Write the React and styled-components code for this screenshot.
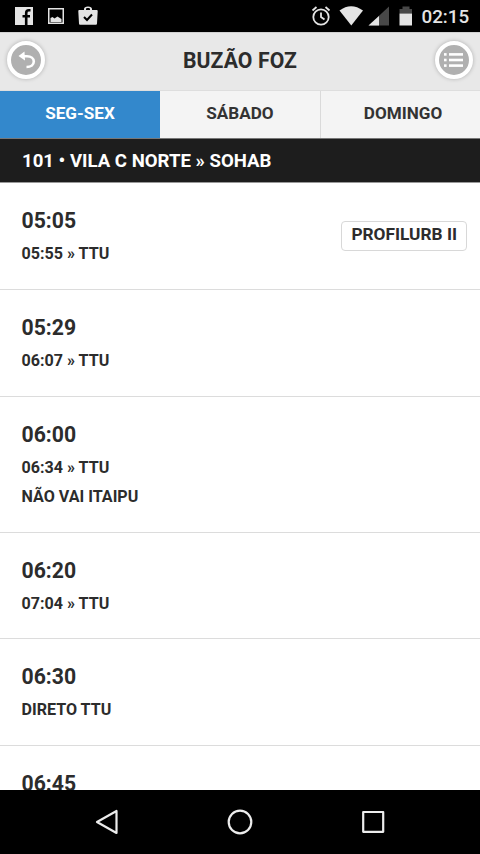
import React from 'react';

import styled, { createGlobalStyle } from 'styled-components';

const GlobalStyle = createGlobalStyle`
	body {
		margin: 0;
		background: #000;
		font-family: Roboto, "Liberation Sans", sans-serif;
		color: #2c2c2c;
	}

	* {
		box-sizing: border-box;
	}

	svg {
		display: block;
		flex: none;
	}
`

const Screen = styled.div`
	display: flex;
	flex-direction: column;
	width: 480px;
	height: 854px;
	overflow: hidden;
`

const StatusBar = styled.div`
	display: flex;
	flex: none;
	justify-content: space-between;
	height: 32px;
	background: #000;
	color: #e4e4e4;
`

const Clock = styled.span`
	padding-left: 9.5px;
	font-size: 18.8px;
	font-weight: 500;
	line-height: 34px;
	width: 68px;
	white-space: nowrap;
`

const StatusRight = styled.div`
	display: flex;
`

const Header = styled.header`
	display: flex;
	flex: none;
	align-items: center;
	justify-content: space-between;
	height: 59px;
	padding: 0 7px 3px;
	background: #e8e8e8;
	border-top: 1px solid #d2d2d2;
	border-bottom: 1px solid #dedede;
`

const Title = styled.h1`
	margin: 0;
	font-size: 21.2px;
	font-weight: 700;
	letter-spacing: 0.1px;
`

const RoundButton = styled.button`
	display: flex;
	align-items: center;
	justify-content: center;
	width: 38px;
	height: 38px;
	padding: 0;
	border: 4px solid #fff;
	border-radius: 50%;
	background: #b0b0b0;
	box-shadow: 0 0 4px rgba(0, 0, 0, 0.25);
`

const Tabs = styled.nav`
	display: flex;
	flex: none;
	height: 48px;
	background: #f4f4f4;
	border-bottom: 1px solid #777;
`

const Tab = styled.button`
	flex: none;
	width: ${props => props.$width}px;
	padding: 0 0 3px;
	border: 0;
	border-left: ${props => props.$divided ? '1px solid #dadada' : '0'};
	background: ${props => props.$active ? '#3388cc' : '#f4f4f4'};
	color: ${props => props.$active ? '#fff' : '#333'};
	font-family: inherit;
	font-size: 17.1px;
	font-weight: 700;
`

const RouteName = styled.h2`
	flex: none;
	height: 44px;
	margin: 0;
	padding-left: 22px;
	background: #1d1d1d;
	border-bottom: 1px solid #999;
	color: #fff;
	font-size: 18.6px;
	font-weight: 700;
	line-height: 44px;
`

const Schedule = styled.ul`
	flex: 1;
	min-height: 0;
	margin: 0;
	padding: 0;
	overflow: hidden;
	list-style: none;
	background: #fff;
`

const Row = styled.li`
	display: flex;
	align-items: flex-start;
	justify-content: space-between;
	height: ${props => props.$height}px;
	padding: 24px 13px 0 21.5px;
	border-bottom: 1px solid #dcdcdc;
`

const Time = styled.p`
	margin: 0 0 4px;
	font-size: 21.2px;
	font-weight: 700;
	line-height: 28px;
`

const Note = styled.p`
	margin: 0;
	font-size: 16.1px;
	font-weight: 700;
	line-height: 29px;
`

const Badge = styled.span`
	height: 30px;
	margin-top: 14px;
	padding: 0 9px;
	border: 1px solid #d8d8d8;
	border-radius: 4px;
	font-size: 17.3px;
	font-weight: 700;
	line-height: 24px;
`

const NavBar = styled.div`
	display: flex;
	flex: none;
	justify-content: center;
	height: 64px;
	background: #000;
`

const trips = [
	{ time: '05:05', notes: ['05:55 » TTU'], badge: 'PROFILURB II', height: 106.8 },
	{ time: '05:29', notes: ['06:07 » TTU'], height: 106.8 },
	{ time: '06:00', notes: ['06:34 » TTU', 'NÃO VAI ITAIPU'], height: 136.4 },
	{ time: '06:20', notes: ['07:04 » TTU'], height: 106.5 },
	{ time: '06:30', notes: ['DIRETO TTU'], height: 106.5 },
	{ time: '06:45', notes: [], height: 107 },
]

function NotificationIcons() {
	return (
		<svg width="110" height="32" viewBox="0 0 110 32" fill="#e4e4e4">
			<path d="M15 7h18v18H15z" />
			<path d="M26.200 25v-12q0-2.700 2.800-2.700h1.500M22.500 16.200h7.500" fill="none" stroke="#000" strokeWidth="2.600" />
			<path fillRule="evenodd" d="M48 8h16v16H48zM49.500 9.500v13h13v-13z" />
			<path d="M50.500 22v-4l2-1 2 1.500 3-2 1.500 1 2.500 1.500v3z" />
			<path fillRule="evenodd" d="M79.500 10H84V9c0-1.500 1.500-2.500 4-2.500s4 1 4 2.500v1h4.500c.8 0 1.200.5 1.200 1.200L97 23.500c0 .8-.6 1.300-1.400 1.300H80.400c-.8 0-1.400-.5-1.400-1.300l-.7-12.300c0-.7.4-1.200 1.200-1.200zM86 10h4V9c0-.7-.7-1-2-1s-2 .3-2 1z" />
			<path d="M84 17l3 3 5-5.500" fill="none" stroke="#000" strokeWidth="2" />
		</svg>
	)
}

function SystemIcons() {
	return (
		<svg width="112" height="32" viewBox="300 0 112 32" fill="#e4e4e4">
			<g fill="none" stroke="#e4e4e4" strokeWidth="1.800">
				<circle cx="321" cy="17" r="7.700" />
				<path d="M321 12.500V17l3.500 2.500M312.500 10.500l4-3.500M329.500 10.500l-4-3.500" />
			</g>
			<path d="M339.500 10.500q11.500-8.500 23.500 0L351.300 25.500z" />
			<path d="M389 6.500v19h-20.500z" fill="#484848" />
			<path d="M379 16v9.500h-10.500z" />
			<path d="M399.500 9h3V6.500h7V9h3v4.500h-13z" fill="#484848" />
			<path d="M399.500 13.500h13v12h-13z" />
		</svg>
	)
}

function BackIcon() {
	return (
		<svg width="30" height="30" viewBox="0 0 30 30">
			<path d="M11 11.300h5c4 0 6.800 2 6.800 5.200s-2.800 5.500-7.300 5.500" fill="none" stroke="#fff" strokeWidth="2.600" />
			<path d="M7.500 11l6-4.500 .5 9z" fill="#fff" />
		</svg>
	)
}

function ListIcon() {
	return (
		<svg width="30" height="30" viewBox="0 0 30 30" fill="#fff">
			{[8.100, 13.700, 19.300].map(y => (
				<React.Fragment key={y}>
					<rect x="5" y={y} width="2.600" height="2.600" />
					<rect x="10" y={y} width="14" height="2.600" />
				</React.Fragment>
			))}
		</svg>
	)
}

function NavIcons() {
	return (
		<svg width="480" height="64" viewBox="0 0 480 64" fill="none" stroke="#ececec" strokeWidth="2.200" strokeLinejoin="round">
			<path d="M97 32l19.500-11v22z" />
			<circle cx="240" cy="32" r="11.300" />
			<rect x="363.200" y="22" width="20" height="19.800" />
		</svg>
	)
}

function App() {
	return (
		<Screen>
			<GlobalStyle />
			<StatusBar>
				<NotificationIcons />
				<StatusRight>
					<SystemIcons />
					<Clock>02:15</Clock>
				</StatusRight>
			</StatusBar>
			<Header>
				<RoundButton><BackIcon /></RoundButton>
				<Title>BUZÃO FOZ</Title>
				<RoundButton><ListIcon /></RoundButton>
			</Header>
			<Tabs>
				<Tab $active $width={160}>SEG-SEX</Tab>
				<Tab $width={160}>SÁBADO</Tab>
				<Tab $divided $width={165}>DOMINGO</Tab>
			</Tabs>
			<RouteName>101 • VILA C NORTE » SOHAB</RouteName>
			<Schedule>
				{trips.map((trip) => (
					<Row key={trip.time} $height={trip.height}>
						<div>
							<Time>{trip.time}</Time>
							{trip.notes.map((note, index) => <Note key={index}>{note}</Note>)}
						</div>
						{trip.badge && <Badge>{trip.badge}</Badge>}
					</Row>
				))}
			</Schedule>
			<NavBar><NavIcons /></NavBar>
		</Screen>
	)
}

export default App
